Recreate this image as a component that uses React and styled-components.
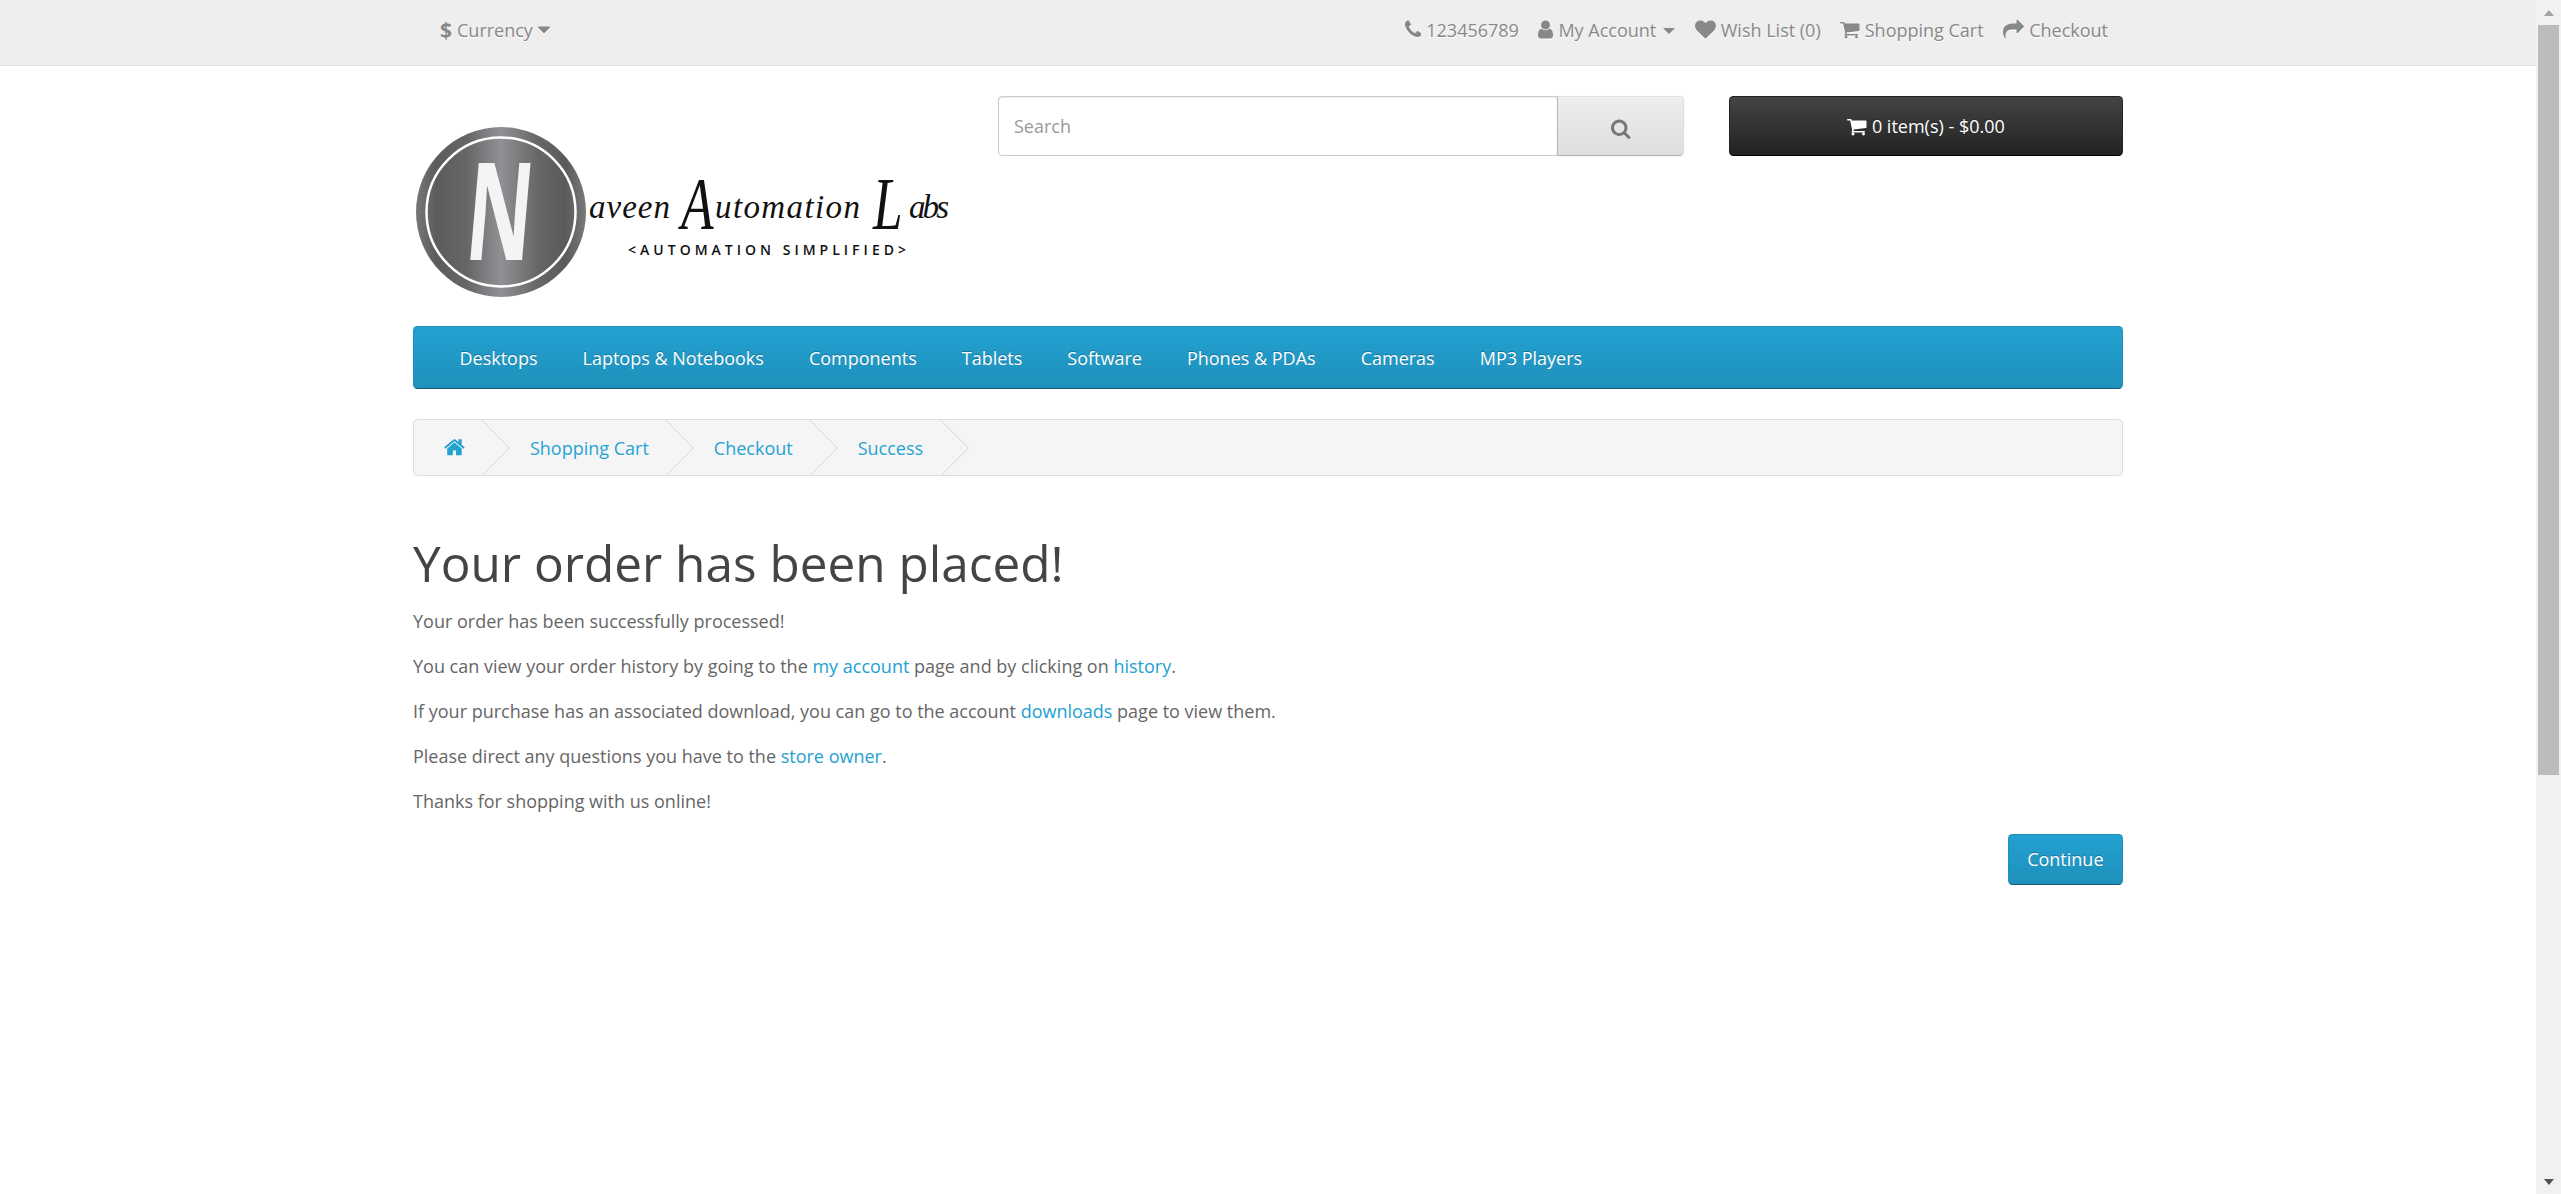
import React from 'react';
import styled, { createGlobalStyle } from 'styled-components';

const GlobalStyle = createGlobalStyle`
  html, body {
    margin: 0;
    padding: 0;
    height: 100%;
    overflow: hidden;
    background: #fff;
  }
  body {
    font-family: "Open Sans", sans-serif;
    font-size: 18px;
    line-height: 30px;
    color: #666;
  }
  * { box-sizing: border-box; }
`;

// Font Awesome 4 glyphs, on the 1792 grid
const GLYPHS = {
  phone: { w: 1408, d: 'M1600 1240q0 27-10 70.5t-21 68.5q-21 50-122 106-94 51-186 51-27 0-53-3.5t-57.5-12.5-47-14.5-55.5-20.5-49-18q-98-35-175-83-127-79-264-216t-216-264q-48-77-83-175-3-9-18-49t-20.5-55.5-14.5-47-12.5-57.5-3.5-53q0-92 51-186 56-101 106-122 25-11 68.5-21t70.5-10q14 0 21 3 18 6 53 76 11 19 30 54t35 63.5 31 53.5q3 4 17.5 25t21.5 35.5 7 28.5q0 20-28.5 50t-62 55-62 53-28.5 46q0 9 5 22.5t8.5 20.5 14 24 11.5 19q76 137 174 235t235 174q2 1 19 11.5t24 14 20.5 8.5 22.5 5q18 0 46-28.5t53-62 55-62 50-28.5q14 0 28.5 7t35.5 21.5 25 17.5q25 15 53.5 31t63.5 35 54 30q70 35 76 53 3 7 3 21z' },
  user: { w: 1280, d: 'M1536 1399q0 109-62.5 187t-150.5 78h-854q-88 0-150.5-78t-62.5-187q0-85 8.5-160.5t31.5-152 58.5-131 94-89 134.5-34.5q131 128 313 128t313-128q76 0 134.5 34.5t94 89 58.5 131 31.5 152 8.5 160.5zm-256-887q0 159-112.5 271.5t-271.5 112.5-271.5-112.5-112.5-271.5 112.5-271.5 271.5-112.5 271.5 112.5 112.5 271.5z' },
  heart: { w: 1792, d: 'M896 1664q-26 0-44-18l-624-602q-10-8-27.5-26t-55.5-65.5-68-97.5-53.5-121-23.5-138q0-220 127-344t351-124q62 0 126.5 21.5t120 58 95.5 68.5 76 68q36-36 76-68t95.5-68.5 120-58 126.5-21.5q224 0 351 124t127 344q0 221-229 450l-623 600q-18 18-44 18z' },
  cart: { w: 1664, d: 'M704 1536q0 52-38 90t-90 38-90-38-38-90 38-90 90-38 90 38 38 90zm896 0q0 52-38 90t-90 38-90-38-38-90 38-90 90-38 90 38 38 90zm128-1088v512q0 24-16.5 42.5t-40.5 21.5l-1044 122q13 60 13 70 0 16-24 64h920q26 0 45 19t19 45-19 45-45 19h-1024q-26 0-45-19t-19-45q0-11 8-31.5t16-36 21.5-40 15.5-29.5l-177-823h-204q-26 0-45-19t-19-45 19-45 45-19h256q16 0 28.5 6.5t19.5 15.5 13 24.5 8 26 5.5 29.5 4.5 26h1201q26 0 45 19t19 45z' },
  share: { w: 1792, d: 'M1792 640q0 26-19 45l-512 512q-19 19-45 19t-45-19-19-45v-256h-224q-98 0-175.5 6t-154 21.5-133 42.5-105.5 69.5-80 101-48.5 138.5-17.5 181q0 55 5 123 0 6 2.5 23.5t2.5 26.5q0 15-8.5 25t-23.5 10q-16 0-28-17-7-9-13-22t-13.5-30-10.5-24q-127-285-127-451 0-199 53-333 162-403 875-403h224v-256q0-26 19-45t45-19 45 19l512 512q19 19 19 45z' },
  home: { w: 1664, d: 'M1472 992v480q0 26-19 45t-45 19h-384v-384h-256v384h-384q-26 0-45-19t-19-45v-480q0-1 .5-3t.5-3l575-474 575 474q1 2 1 6zm223-69l-62 74q-8 9-21 11h-3q-13 0-21-7l-692-577-692 577q-12 8-24 7-13-2-21-11l-62-74q-8-10-7-23.5t11-21.5l719-599q32-26 76-26t76 26l244 204v-195q0-14 9-23t23-9h192q14 0 23 9t9 23v408l219 182q10 8 11 21.5t-7 23.5z' },
  search: { w: 1664, d: 'M1216 832q0-185-131.5-316.5t-316.5-131.5-316.5 131.5-131.5 316.5 131.5 316.5 316.5 131.5 316.5-131.5 131.5-316.5zm512 832q0 52-38 90t-90 38q-54 0-90-38l-343-342q-179 124-399 124-143 0-273.5-55.5t-225-150-150-225-55.5-273.5 55.5-273.5 150-225 225-150 273.5-55.5 273.5 55.5 225 150 150 225 55.5 273.5q0 220-124 399l343 343q37 37 37 90z' },
  caretDown: { w: 1024, d: 'M1408 704q0 26-19 45l-448 448q-19 19-45 19t-45-19l-448-448q-19-19-19-45t19-45 45-19h896q26 0 45 19t19 45z' },
};

const Icon = ({ name, size = 21, ...rest }) => {
  const { w, d } = GLYPHS[name];
  return (
    <IconSvg
      viewBox={`${(1792 - w) / 2} 0 ${w} 1792`}
      width={(size * w) / 1792}
      height={size}
      {...rest}
    >
      <path d={d} fill="currentColor" />
    </IconSvg>
  );
};

const scriptProps = {
  fontFamily: "'Liberation Serif', serif",
  fontStyle: 'italic',
  fill: '#111',
};

const Logo = () => (
  <LogoSvg viewBox="0 0 540 215" aria-label="Naveen Automation Labs">
    <defs>
      <linearGradient id="logoMetal" x1="0" y1="0" x2="1" y2="0">
        <stop offset="0" stopColor="#777" />
        <stop offset="0.12" stopColor="#5c5c5c" />
        <stop offset="0.3" stopColor="#666" />
        <stop offset="0.5" stopColor="#909195" />
        <stop offset="0.72" stopColor="#666" />
        <stop offset="0.88" stopColor="#5a5a5a" />
        <stop offset="1" stopColor="#7a7a7a" />
      </linearGradient>
    </defs>
    <circle cx="88" cy="116" r="85" fill="url(#logoMetal)" />
    <circle cx="88" cy="116" r="74.5" fill="none" stroke="#fff" strokeWidth="2.5" />
    <text
      transform="translate(50 164) skewX(-5) scale(0.6 1)"
      fontFamily="'Open Sans', sans-serif"
      fontWeight="700"
      fontSize="136"
      fill="#f4f4f4"
    >
      N
    </text>
    <text {...scriptProps} fontSize="33" y="122">
      <tspan x="176" textLength="81" lengthAdjust="spacing">aveen</tspan>
      <tspan x="302" textLength="145" lengthAdjust="spacing">utomation</tspan>
      <tspan x="496" textLength="40" lengthAdjust="spacing">abs</tspan>
    </text>
    <text {...scriptProps} fontSize="74" transform="translate(268 133) scale(0.72 1)">A</text>
    <text {...scriptProps} fontSize="74" transform="translate(460 133) scale(0.72 1)">L</text>
    <text
      x="215"
      y="159"
      textLength="278"
      lengthAdjust="spacing"
      fontFamily="'Open Sans', sans-serif"
      fontWeight="600"
      fontSize="14"
      fill="#111"
    >
      {'<AUTOMATION SIMPLIFIED>'}
    </text>
  </LogoSvg>
);

const App = () => {
  const menu = ['Desktops', 'Laptops & Notebooks', 'Components', 'Tablets', 'Software', 'Phones & PDAs', 'Cameras', 'MP3 Players'];
  return (
    <Screen>
      <GlobalStyle />
      <Page>
        <TopBar>
          <Container>
            <TopRow>
              <CurrencyButton>
                <strong>$</strong>
                <span>Currency</span>
                <Icon name="caretDown" />
              </CurrencyButton>
              <TopLinks>
                <TopLink><Icon name="phone" /><span>123456789</span></TopLink>
                <TopLink><Icon name="user" /><span>My Account</span><SmallCaret /></TopLink>
                <TopLink><Icon name="heart" /><span>Wish List (0)</span></TopLink>
                <TopLink><Icon name="cart" /><span>Shopping Cart</span></TopLink>
                <TopLink><Icon name="share" /><span>Checkout</span></TopLink>
              </TopLinks>
            </TopRow>
          </Container>
        </TopBar>

        <Container>
          <Header>
            <Logo />
            <SearchGroup>
              <SearchInput placeholder="Search" />
              <SearchButton><Icon name="search" /></SearchButton>
            </SearchGroup>
            <CartButton><Icon name="cart" /><span>0 item(s) - $0.00</span></CartButton>
          </Header>

          <Menu>
            {menu.map((item) => (
              <MenuItem key={item}>{item}</MenuItem>
            ))}
          </Menu>

          <Breadcrumb>
            <Crumb><CrumbLink><Icon name="home" size={22.5} /></CrumbLink></Crumb>
            <Crumb><CrumbLink>Shopping Cart</CrumbLink></Crumb>
            <Crumb><CrumbLink>Checkout</CrumbLink></Crumb>
            <Crumb><CrumbLink>Success</CrumbLink></Crumb>
          </Breadcrumb>

          <Content>
            <Title>Your order has been placed!</Title>
            <Para>Your order has been successfully processed!</Para>
            <Para>You can view your order history by going to the <TextLink>my account</TextLink> page and by clicking on <TextLink>history</TextLink>.</Para>
            <Para>If your purchase has an associated download, you can go to the account <TextLink>downloads</TextLink> page to view them.</Para>
            <Para>Please direct any questions you have to the <TextLink>store owner</TextLink>.</Para>
            <Para>Thanks for shopping with us online!</Para>
            <Buttons>
              <ContinueButton>Continue</ContinueButton>
            </Buttons>
          </Content>
        </Container>
      </Page>

      <Scrollbar>
        <ScrollArrow $up />
        <ScrollTrack><ScrollThumb /></ScrollTrack>
        <ScrollArrow />
      </Scrollbar>
    </Screen>
  );
};

export default App;

/* Styled Components */

const Screen = styled.div`
  display: flex;
  height: 100vh;
  overflow: hidden;
`;

const Page = styled.div`
  flex: 1;
  min-width: 0;
  overflow: hidden;
`;

const Container = styled.div`
  width: 1755px;
  margin: 0 auto;
  padding: 0 22.5px;
`;

const IconSvg = styled.svg`
  display: block;
  flex: none;
`;

const TopBar = styled.nav`
  height: 66px;
  background: #eee;
  border-bottom: 1px solid #e2e2e2;
  margin-bottom: 30px;
`;

const TopRow = styled.div`
  display: flex;
  justify-content: space-between;
  align-items: center;
  height: 59px;
  padding: 0 15px 0 27px;
  color: #888;
  text-shadow: 0 1px 0 #fff;
`;

const CurrencyButton = styled.div`
  display: flex;
  align-items: center;
  gap: 5px;
  color: #888;
  strong { font-weight: 700; font-size: 21px; }
  svg { filter: drop-shadow(0 1px 0 #fff); }
`;

const TopLinks = styled.div`
  display: flex;
  align-items: center;
  gap: 19.5px;
`;

const TopLink = styled.a`
  display: flex;
  align-items: center;
  gap: 5px;
  color: #888;
  svg { filter: drop-shadow(0 1px 0 #fff); }
`;

const SmallCaret = styled.span`
  width: 0;
  height: 0;
  margin-left: 2px;
  margin-top: 3px;
  border-top: 6px solid #888;
  border-left: 6px solid transparent;
  border-right: 6px solid transparent;
`;

const Header = styled.header`
  display: grid;
  grid-template-columns: 540px 686.25px 393.75px;
  column-gap: 45px;
  height: 230px;
  align-items: start;
`;

const LogoSvg = styled.svg`
  display: block;
  width: 540px;
  height: 215px;
`;

const SearchGroup = styled.div`
  display: flex;
  height: 60px;
`;

const SearchInput = styled.input`
  flex: 1;
  min-width: 0;
  height: 60px;
  padding: 0 15px;
  font-family: "Open Sans", sans-serif;
  font-size: 18px;
  color: #555;
  background: #fff;
  border: 1px solid #ccc;
  border-right: none;
  border-radius: 4.5px 0 0 4.5px;
  box-shadow: inset 0 1px 1px rgba(0, 0, 0, 0.075);
  outline: none;
  &::placeholder { color: #999; opacity: 1; }
`;

const SearchButton = styled.button`
  width: 127px;
  height: 60px;
  display: flex;
  align-items: center;
  justify-content: center;
  padding: 4px 0 0;
  color: #777;
  background: linear-gradient(to bottom, #eee, #ddd);
  border: 1px solid;
  border-color: #ddd #ddd #b3b3b3 #b7b7b7;
  border-radius: 0 4.5px 4.5px 0;
  box-shadow: inset 0 1px 0 rgba(255, 255, 255, 0.2), 0 1px 3px rgba(0, 0, 0, 0.05);
`;

const CartButton = styled.button`
  width: 393.75px;
  height: 60px;
  display: flex;
  align-items: center;
  justify-content: center;
  gap: 5px;
  padding: 0;
  font-family: "Open Sans", sans-serif;
  font-size: 18px;
  color: #fff;
  background: linear-gradient(to bottom, #444, #222);
  border: 1px solid;
  border-color: #222 #222 #000;
  border-radius: 4.5px;
  text-shadow: 0 -1px 0 rgba(0, 0, 0, 0.25);
`;

const Menu = styled.nav`
  display: flex;
  height: 63px;
  margin-bottom: 30px;
  background: linear-gradient(to bottom, #23a1d1, #1f90bb);
  border: 1px solid;
  border-color: #1f90bb #1f90bb #145e7a;
  border-radius: 4.5px;
  padding-left: 23px;
`;

const MenuItem = styled.a`
  padding: 0 22.5px;
  line-height: 62px;
  color: #fff;
  text-shadow: 0 -1px 0 rgba(0, 0, 0, 0.25);
  white-space: nowrap;
`;

const Breadcrumb = styled.ul`
  display: flex;
  gap: 5px;
  height: 57px;
  margin: 0 0 30px;
  padding: 0;
  list-style: none;
  align-items: center;
  background: #f5f5f5;
  border: 1px solid #ddd;
  border-radius: 4.5px;
  overflow: hidden;
`;

const Crumb = styled.li`
  position: relative;
  padding: 0 30px;
  white-space: nowrap;
  text-shadow: 0 1px 0 #fff;
  &::after {
    content: '';
    position: absolute;
    top: -4.5px;
    right: -7.5px;
    width: 39px;
    height: 39px;
    border-right: 1px solid #ddd;
    border-bottom: 1px solid #ddd;
    transform: rotate(-45deg);
  }
`;

const CrumbLink = styled.a`
  display: flex;
  align-items: center;
  height: 30px;
  color: #23a1d1;
`;

const Content = styled.main`
  display: flow-root;
`;

const Title = styled.h1`
  margin: 30px 0 15.5px;
  font-size: 49.5px;
  font-weight: 400;
  line-height: 1.1;
  color: #444;
`;

const Para = styled.p`
  margin: 0 0 15px;
`;

const TextLink = styled.a`
  color: #23a1d1;
`;

const Buttons = styled.div`
  display: flex;
  justify-content: flex-end;
  margin-top: 18px;
`;

const ContinueButton = styled.button`
  height: 51px;
  padding: 0 18.5px;
  font-family: "Open Sans", sans-serif;
  font-size: 18px;
  color: #fff;
  background: linear-gradient(to bottom, #23a1d1, #1f90bb);
  border: 1px solid;
  border-color: #1f90bb #1f90bb #145e7a;
  border-radius: 4.5px;
  text-shadow: 0 -1px 0 rgba(0, 0, 0, 0.25);
`;

const Scrollbar = styled.aside`
  flex: none;
  width: 25px;
  height: 100%;
  display: flex;
  flex-direction: column;
  background: #f1f1f1;
`;

const ScrollArrow = styled.div`
  flex: none;
  height: 25px;
  display: flex;
  align-items: center;
  justify-content: center;
  &::before {
    content: '';
    width: 0;
    height: 0;
    border-left: 5.5px solid transparent;
    border-right: 5.5px solid transparent;
    ${(p) => (p.$up ? 'border-bottom: 6px solid #a3a3a3;' : 'border-top: 6px solid #505050;')}
  }
`;

const ScrollTrack = styled.div`
  flex: 1;
  padding: 0 2px;
`;

const ScrollThumb = styled.div`
  height: 750px;
  background: #bcbcbc;
`;
